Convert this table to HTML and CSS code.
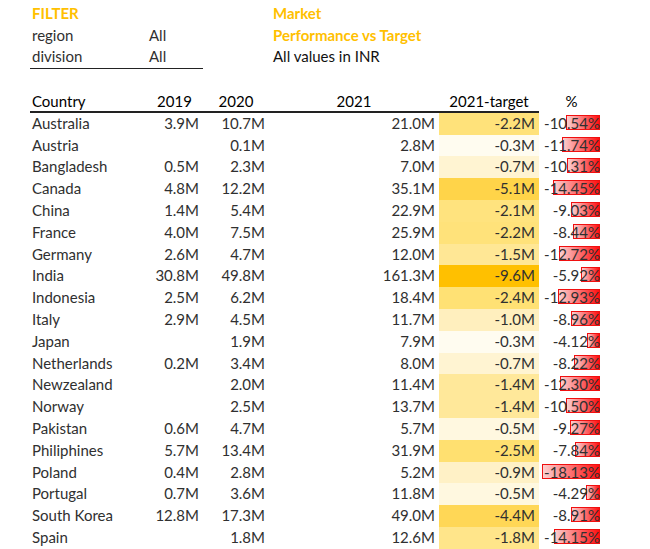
FILE: index.html
```html
<!DOCTYPE html>
<html>
<head>
<meta charset="utf-8">
<link rel="stylesheet" href="styles.css">
</head>
<body>
<div class="top">
  <div class="filter">
    <div class="ttl">FILTER</div>
    <div class="frow"><span class="flabel">region</span><span>All</span></div>
    <div class="frow last"><span class="flabel">division</span><span>All</span></div>
  </div>
  <div class="title">
    <div class="ttl">Market</div>
    <div class="ttl">Performance vs Target</div>
    <div class="sub">All values in INR</div>
  </div>
</div>
<div class="tbl">
  <div class="h l">Country</div><div class="h">2019</div><div class="h">2020</div><div class="h">2021</div><div class="h">2021-target</div><div class="h pcth">%</div>

  <div class="c l">Australia</div><div class="c">3.9M</div><div class="c">10.7M</div><div class="c">21.0M</div><div class="c t" style="background:#FFE27A">-2.2M</div><div class="c p"><span class="bar" style="width:34px"></span><span class="pv">-10.54%</span></div>
  <div class="c l">Austria</div><div class="c"></div><div class="c">0.1M</div><div class="c">2.8M</div><div class="c t" style="background:#FFFCF0">-0.3M</div><div class="c p"><span class="bar" style="width:38px"></span><span class="pv">-11.74%</span></div>
  <div class="c l">Bangladesh</div><div class="c">0.5M</div><div class="c">2.3M</div><div class="c">7.0M</div><div class="c t" style="background:#FFF4D2">-0.7M</div><div class="c p"><span class="bar" style="width:33px"></span><span class="pv">-10.31%</span></div>
  <div class="c l">Canada</div><div class="c">4.8M</div><div class="c">12.2M</div><div class="c">35.1M</div><div class="c t" style="background:#FFD449">-5.1M</div><div class="c p"><span class="bar" style="width:47px"></span><span class="pv">-14.45%</span></div>
  <div class="c l">China</div><div class="c">1.4M</div><div class="c">5.4M</div><div class="c">22.9M</div><div class="c t" style="background:#FFE37E">-2.1M</div><div class="c p"><span class="bar" style="width:29px"></span><span class="pv">-9.03%</span></div>
  <div class="c l">France</div><div class="c">4.0M</div><div class="c">7.5M</div><div class="c">25.9M</div><div class="c t" style="background:#FFE27A">-2.2M</div><div class="c p"><span class="bar" style="width:27px"></span><span class="pv">-8.44%</span></div>
  <div class="c l">Germany</div><div class="c">2.6M</div><div class="c">4.7M</div><div class="c">12.0M</div><div class="c t" style="background:#FFE795">-1.5M</div><div class="c p"><span class="bar" style="width:41px"></span><span class="pv">-12.72%</span></div>
  <div class="c l">India</div><div class="c">30.8M</div><div class="c">49.8M</div><div class="c">161.3M</div><div class="c t" style="background:#FFC000">-9.6M</div><div class="c p"><span class="bar" style="width:19px"></span><span class="pv">-5.92%</span></div>
  <div class="c l">Indonesia</div><div class="c">2.5M</div><div class="c">6.2M</div><div class="c">18.4M</div><div class="c t" style="background:#FFE174">-2.4M</div><div class="c p"><span class="bar" style="width:42px"></span><span class="pv">-12.93%</span></div>
  <div class="c l">Italy</div><div class="c">2.9M</div><div class="c">4.5M</div><div class="c">11.7M</div><div class="c t" style="background:#FFEFBE">-1.0M</div><div class="c p"><span class="bar" style="width:29px"></span><span class="pv">-8.96%</span></div>
  <div class="c l">Japan</div><div class="c"></div><div class="c">1.9M</div><div class="c">7.9M</div><div class="c t" style="background:#FFFCF0">-0.3M</div><div class="c p"><span class="bar" style="width:13px"></span><span class="pv">-4.12%</span></div>
  <div class="c l">Netherlands</div><div class="c">0.2M</div><div class="c">3.4M</div><div class="c">8.0M</div><div class="c t" style="background:#FFF4D2">-0.7M</div><div class="c p"><span class="bar" style="width:26.5px"></span><span class="pv">-8.22%</span></div>
  <div class="c l">Newzealand</div><div class="c"></div><div class="c">2.0M</div><div class="c">11.4M</div><div class="c t" style="background:#FFE89A">-1.4M</div><div class="c p"><span class="bar" style="width:40px"></span><span class="pv">-12.30%</span></div>
  <div class="c l">Norway</div><div class="c"></div><div class="c">2.5M</div><div class="c">13.7M</div><div class="c t" style="background:#FFE89A">-1.4M</div><div class="c p"><span class="bar" style="width:34px"></span><span class="pv">-10.50%</span></div>
  <div class="c l">Pakistan</div><div class="c">0.6M</div><div class="c">4.7M</div><div class="c">5.7M</div><div class="c t" style="background:#FFF8E0">-0.5M</div><div class="c p"><span class="bar" style="width:30px"></span><span class="pv">-9.27%</span></div>
  <div class="c l">Philiphines</div><div class="c">5.7M</div><div class="c">13.4M</div><div class="c">31.9M</div><div class="c t" style="background:#FFE070">-2.5M</div><div class="c p"><span class="bar" style="width:25px"></span><span class="pv">-7.84%</span></div>
  <div class="c l">Poland</div><div class="c">0.4M</div><div class="c">2.8M</div><div class="c">5.2M</div><div class="c t" style="background:#FFF1C6">-0.9M</div><div class="c p"><span class="bar" style="width:58.5px"></span><span class="pv">-18.13%</span></div>
  <div class="c l">Portugal</div><div class="c">0.7M</div><div class="c">3.6M</div><div class="c">11.8M</div><div class="c t" style="background:#FFF8E0">-0.5M</div><div class="c p"><span class="bar" style="width:14px"></span><span class="pv">-4.29%</span></div>
  <div class="c l">South Korea</div><div class="c">12.8M</div><div class="c">17.3M</div><div class="c">49.0M</div><div class="c t" style="background:#FFD756">-4.4M</div><div class="c p"><span class="bar" style="width:29px"></span><span class="pv">-8.91%</span></div>
  <div class="c l">Spain</div><div class="c"></div><div class="c">1.8M</div><div class="c">12.6M</div><div class="c t" style="background:#FFE58A">-1.8M</div><div class="c p"><span class="bar" style="width:46px"></span><span class="pv">-14.15%</span></div>
</div>
</body>
</html>
```
FILE: styles.css
```css
html, body {
  margin: 0;
  padding: 0;
  background: #ffffff;
}
body {
  font-family: Lato, "Open Sans", sans-serif;
  font-size: 15px;
  color: #303030;
  width: 650px;
  height: 549px;
  overflow: hidden;
}
.top {
  display: flex;
  padding-top: 3px;
  padding-left: 30px;
}
.filter {
  width: 173px;
}
.filter > div,
.title > div {
  height: 21.7px;
  line-height: 21.7px;
  padding-left: 2px;
}
.ttl {
  color: #FFC000;
  font-weight: bold;
}
.frow {
  display: flex;
}
.flabel {
  width: 117px;
}
.filter .frow.last {
  border-bottom: 1.5px solid #222;
}
.title {
  margin-left: 68px;
}
.sub {
  color: #111;
}
.tbl {
  display: grid;
  grid-template-columns: 116px 57px 66px 170px 100px 65px;
  grid-auto-rows: 21.8px;
  margin-left: 30px;
  margin-top: 22px;
}
.h {
  color: #000;
  text-align: center;
  line-height: 20px;
  height: 20px;
  border-bottom: 2px solid #222;
}
.h.l {
  text-align: left;
  padding-left: 2px;
}
.h.pcth {
  border-bottom: none;
}
.c {
  text-align: right;
  padding-right: 4px;
  line-height: 21.8px;
  white-space: nowrap;
}
.c.l {
  text-align: left;
  padding-left: 2px;
  padding-right: 0;
}
.p {
  position: relative;
}
.bar {
  position: absolute;
  right: 4px;
  top: 2px;
  height: 15px;
  box-sizing: border-box;
  border: 1px solid #F01010;
  background: linear-gradient(to right, #FBD0D0, #FF1010);
}
.pv {
  position: relative;
}
```
